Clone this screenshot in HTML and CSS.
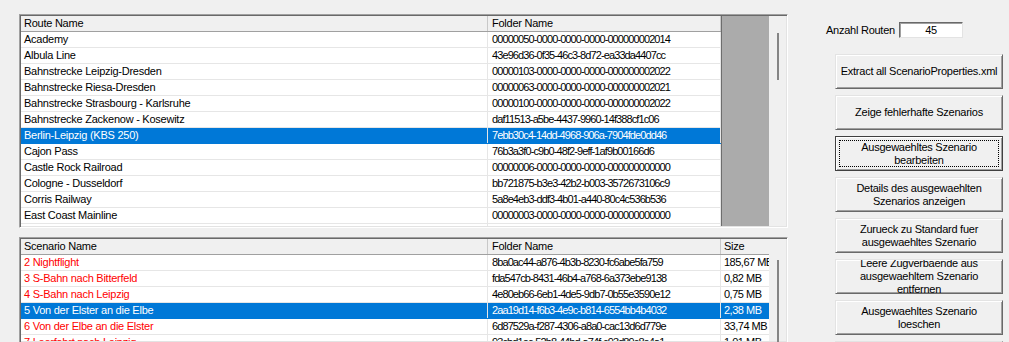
FILE: index.html
```html
<html>
<head>
<link rel="stylesheet" href="styles.css">
</head>
<body>
<div class="app">
	<div class="lists">
		<div class="grid routes">
			<div class="table">
				<div class="row head"><div class="cell c-name">Route Name</div><div class="cell c-folder">Folder Name</div></div>
				<div class="row"><div class="cell c-name">Academy</div><div class="cell c-folder">00000050-0000-0000-0000-000000002014</div></div>
				<div class="row"><div class="cell c-name">Albula Line</div><div class="cell c-folder">43e96d36-0f35-46c3-8d72-ea33da4407cc</div></div>
				<div class="row"><div class="cell c-name">Bahnstrecke Leipzig-Dresden</div><div class="cell c-folder">00000103-0000-0000-0000-000000002022</div></div>
				<div class="row"><div class="cell c-name">Bahnstrecke Riesa-Dresden</div><div class="cell c-folder">00000063-0000-0000-0000-000000002021</div></div>
				<div class="row"><div class="cell c-name">Bahnstrecke Strasbourg - Karlsruhe</div><div class="cell c-folder">00000100-0000-0000-0000-000000002022</div></div>
				<div class="row"><div class="cell c-name">Bahnstrecke Zackenow - Kosewitz</div><div class="cell c-folder">daf11513-a5be-4437-9960-14f388cf1c06</div></div>
				<div class="row selected"><div class="cell c-name">Berlin-Leipzig (KBS 250)</div><div class="cell c-folder">7ebb30c4-14dd-4968-906a-7904fde0dd46</div></div>
				<div class="row"><div class="cell c-name">Cajon Pass</div><div class="cell c-folder">76b3a3f0-c9b0-48f2-9eff-1af9b00166d6</div></div>
				<div class="row"><div class="cell c-name">Castle Rock Railroad</div><div class="cell c-folder">00000006-0000-0000-0000-000000000000</div></div>
				<div class="row"><div class="cell c-name">Cologne - Dusseldorf</div><div class="cell c-folder">bb721875-b3e3-42b2-b003-3572673106c9</div></div>
				<div class="row"><div class="cell c-name">Corris Railway</div><div class="cell c-folder">5a8e4eb3-ddf3-4b01-a440-80c4c536b536</div></div>
				<div class="row"><div class="cell c-name">East Coast Mainline</div><div class="cell c-folder">00000003-0000-0000-0000-000000000000</div></div>
				<div class="row"><div class="cell c-name">Edinburgh - Glasgow</div><div class="cell c-folder">00000004-0000-0000-0000-000000000000</div></div>
			</div>
			<div class="filler"></div>
			<div class="vscroll"><div class="thumb"></div></div>
		</div>

		<div class="grid scenarios">
			<div class="table wide">
				<div class="row head"><div class="cell c-name">Scenario Name</div><div class="cell c-folder">Folder Name</div><div class="cell c-size">Size</div></div>
				<div class="row bad"><div class="cell c-name">2 Nightflight</div><div class="cell c-folder">8ba0ac44-a876-4b3b-8230-fc6abe5fa759</div><div class="cell c-size">185,67 MB</div></div>
				<div class="row bad"><div class="cell c-name">3 S-Bahn nach Bitterfeld</div><div class="cell c-folder">fda547cb-8431-46b4-a768-6a373ebe9138</div><div class="cell c-size">0,82 MB</div></div>
				<div class="row bad"><div class="cell c-name">4 S-Bahn nach Leipzig</div><div class="cell c-folder">4e80eb66-6eb1-4de5-9db7-0b55e3590e12</div><div class="cell c-size">0,75 MB</div></div>
				<div class="row bad selected"><div class="cell c-name">5 Von der Elster an die Elbe</div><div class="cell c-folder">2aa19d14-f6b3-4e9c-b814-6554bb4b4032</div><div class="cell c-size">2,38 MB</div></div>
				<div class="row bad"><div class="cell c-name">6 Von der Elbe an die Elster</div><div class="cell c-folder">6d87529a-f287-4306-a8a0-cac13d6d779e</div><div class="cell c-size">33,74 MB</div></div>
				<div class="row bad"><div class="cell c-name">7 Leerfahrt nach Leipzig</div><div class="cell c-folder">93cbd1ec-52b8-44bd-a74f-c93d89c8e4a1</div><div class="cell c-size">1,01 MB</div></div>
			</div>
			<div class="vscroll low"><div class="thumb"></div></div>
		</div>
	</div>

	<div class="side">
		<div class="count">
			<span class="count-label">Anzahl Routen</span>
			<div class="count-box">45</div>
		</div>
		<div class="buttons">
			<button class="btn">Extract all ScenarioProperties.xml</button>
			<button class="btn">Zeige fehlerhafte Szenarios</button>
			<button class="btn default"><span>Ausgewaehltes Szenario<br>bearbeiten</span></button>
			<button class="btn"><span>Details des ausgewaehlten<br>Szenarios anzeigen</span></button>
			<button class="btn"><span>Zurueck zu Standard fuer<br>ausgewaehltes Szenario</span></button>
			<button class="btn"><span>Leere Zugverbaende aus<br>ausgewaehltem Szenario<br>entfernen</span></button>
			<button class="btn"><span>Ausgewaehltes Szenario<br>loeschen</span></button>
			<button class="btn"><span>Alle Szenarios<br>exportieren</span></button>
		</div>
	</div>
</div>
</body>
</html>
```

FILE: styles.css
```css
body {
	margin: 0;
	width: 1009px;
	height: 342px;
	overflow: hidden;
	background-color: #f0f0f0;
	font-family: "Liberation Sans", Arial, sans-serif;
	font-size: 11px;
	letter-spacing: -0.25px;
	color: #000000;
}

.app {
	display: flex;
	padding: 14px 0 0 19px;
}

.lists {
	display: flex;
	flex-direction: column;
	gap: 9px;
	width: 769px;
	flex-shrink: 0;
}

/* sunken grid frame */
.grid {
	display: flex;
	box-sizing: border-box;
	width: 769px;
	padding: 1px;
	border: 1px solid;
	border-color: #a0a0a0 #ffffff #ffffff #a0a0a0;
	box-shadow: inset 1px 1px #696969, inset -1px -1px #e3e3e3;
	overflow: hidden;
}

.routes {
	height: 214px;
}

.scenarios {
	height: 105px;
	border-bottom: none;
}

.table {
	width: 700px;
	flex-shrink: 0;
	overflow: hidden;
	background-color: #ffffff;
}

.table.wide {
	width: 748px;
}

.row {
	display: flex;
	box-sizing: border-box;
	height: 16px;
	border-bottom: 1px solid #e6e6e6;
	background-color: #ffffff;
}

.row.head {
	background-color: #f0f0f0;
	border-bottom: 1px solid #a0a0a0;
}

.cell {
	box-sizing: border-box;
	line-height: 15px;
	white-space: nowrap;
	overflow: hidden;
	border-right: 1px solid #e6e6e6;
	padding-left: 3px;
}

.row.head .cell {
	border-right-color: #c8c8c8;
	letter-spacing: -0.25px;
}

.c-name {
	width: 467px;
}

.c-folder {
	width: 233px;
	padding-left: 4px;
	letter-spacing: -0.9px;
}

.c-size {
	width: 48px;
	padding-left: 3px;
	border-right: none;
	letter-spacing: -0.5px;
}

.row.bad .c-name {
	color: #ff0000;
}

.row.selected {
	background-color: #0078d7;
	border-bottom-color: #0078d7;
}

.row.selected .cell {
	color: #ffffff;
	border-right-color: #e6e6e6;
}

.filler {
	box-sizing: border-box;
	width: 48px;
	flex-shrink: 0;
	background-color: #ababab;
	border-left: 1px solid #6d6d6d;
}

.vscroll {
	width: 17px;
	flex-shrink: 0;
	background-color: #f0f0f0;
}

.thumb {
	width: 2px;
	height: 47px;
	margin-top: 17px;
	margin-left: 8px;
	background-color: #858585;
}

.vscroll.low .thumb {
	margin-top: 21px;
	height: 120px;
}

.side {
	padding: 8px 0 0 38px;
}

.count {
	display: flex;
	align-items: center;
	height: 16px;
}

.count-label {
	width: 73px;
	white-space: nowrap;
}

.count-box {
	box-sizing: border-box;
	width: 64px;
	height: 16px;
	line-height: 14px;
	text-align: center;
	background-color: #ffffff;
	border: 1px solid;
	border-color: #696969 #e3e3e3 #e3e3e3 #696969;
	box-shadow: inset 1px 1px #a0a0a0;
}

.buttons {
	display: flex;
	flex-direction: column;
	gap: 6px;
	margin: 16px 0 0 9px;
}

.btn {
	display: flex;
	align-items: center;
	justify-content: center;
	box-sizing: border-box;
	width: 168px;
	height: 35px;
	padding: 0;
	margin: 0;
	overflow: hidden;
	flex-shrink: 0;
	font-family: "Liberation Sans", Arial, sans-serif;
	font-size: 11px;
	letter-spacing: -0.25px;
	line-height: 13px;
	color: #000000;
	text-align: center;
	background-color: #f0f0f0;
	border: 1px solid;
	border-color: #e3e3e3 #696969 #696969 #e3e3e3;
	box-shadow: inset 1px 1px #ffffff, inset -1px -1px #a0a0a0;
	border-radius: 0;
}

.btn span {
	display: block;
	white-space: nowrap;
}

.btn.default {
	border-color: #404040;
	outline: 1px dotted #000000;
	outline-offset: -5px;
}
```
